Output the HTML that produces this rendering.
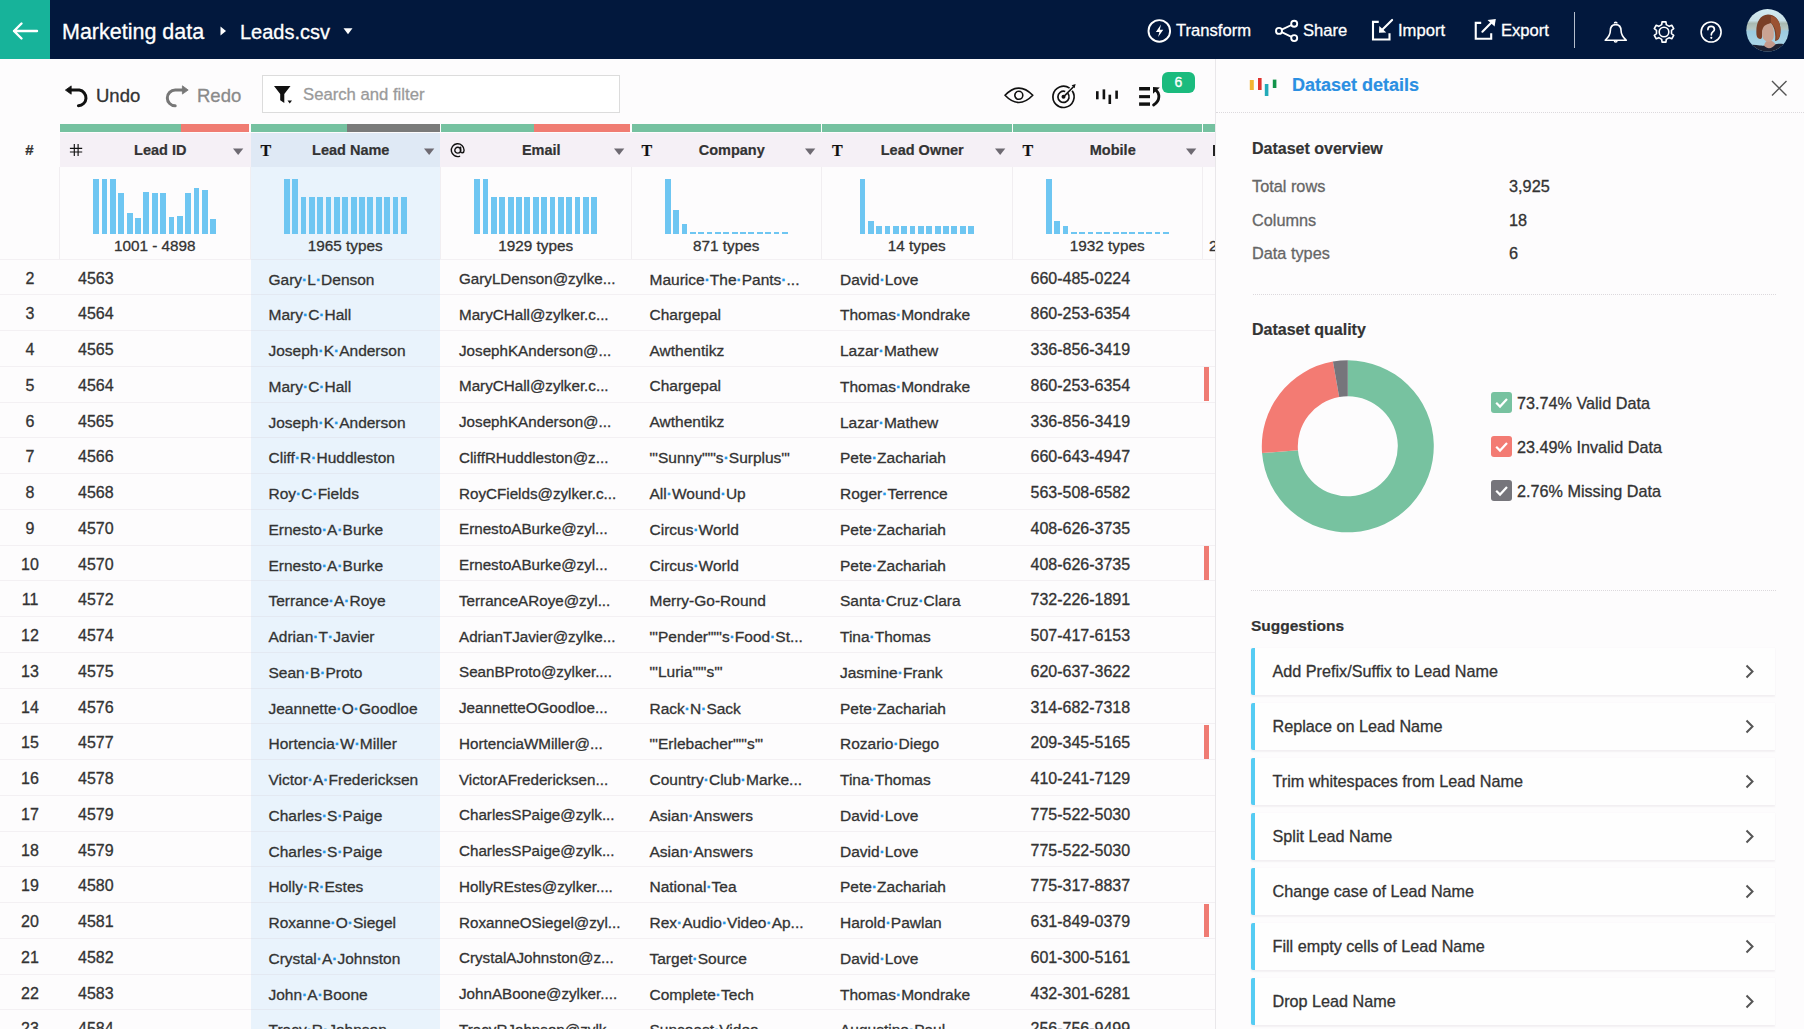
<!DOCTYPE html><html><head><meta charset="utf-8"><style>
*{margin:0;padding:0;box-sizing:border-box}
html,body{width:1804px;height:1029px;overflow:hidden;background:#fdfcfd;font-family:"Liberation Sans", sans-serif;color:#303030}
.a{position:absolute}
.t{position:absolute;white-space:nowrap;line-height:1;-webkit-text-stroke:0.3px currentColor}
.t[style*="bold"]{-webkit-text-stroke:0.2px currentColor}
i.d{font-style:normal;color:#2196e8;font-weight:bold}
</style></head><body>
<div class="a" style="left:0;top:0;width:1804px;height:59px;background:#02183d"></div>
<div class="a" style="left:0;top:0;width:50px;height:59px;background:#17b39a"></div>
<svg class="a" style="left:0;top:0" width="50" height="59"><path d="M37 31 H14 M21.5 23.5 L14 31 L21.5 38.5" stroke="#fff" stroke-width="2.4" fill="none" stroke-linecap="round" stroke-linejoin="round"/></svg>
<div class="t" style="left:62px;top:21.5px;font-size:21.5px;color:#fff">Marketing data</div>
<svg class="a" style="left:218px;top:24px" width="12" height="14"><path d="M2.5 2.6 L8 7.1 L2.5 11.6Z" fill="#fff"/></svg>
<div class="t" style="left:240px;top:21.5px;font-size:20px;color:#fff">Leads.csv</div>
<svg class="a" style="left:341px;top:26px" width="14" height="10"><path d="M2.5 2.3 H11.5 L7 8.3Z" fill="#fff"/></svg>
<svg class="a" style="left:1140px;top:10px" width="40" height="42"><circle cx="19.3" cy="20.9" r="10.8" stroke="#fff" stroke-width="1.9" fill="none"/><path d="M21 14.5 L15.9 22 H19.4 L18.1 27.1 L23.3 19.7 H19.8 Z" fill="#fff"/></svg>
<div class="t" style="left:1176px;top:23.3px;font-size:16.6px;color:#fff">Transform</div>
<svg class="a" style="left:1270px;top:14px" width="32" height="34"><circle cx="24.2" cy="9.7" r="3" stroke="#fff" stroke-width="1.9" fill="none"/><circle cx="9" cy="16.9" r="3" stroke="#fff" stroke-width="1.9" fill="none"/><circle cx="24.2" cy="24.1" r="3" stroke="#fff" stroke-width="1.9" fill="none"/><path d="M11.7 15.6 L21.5 11 M11.7 18.2 L21.5 22.8" stroke="#fff" stroke-width="1.9"/></svg>
<div class="t" style="left:1303px;top:23.3px;font-size:16.6px;color:#fff">Share</div>
<svg class="a" style="left:1366px;top:14px" width="32" height="32"><path d="M12.75 7.9 H7 V25.5 H23.5 V19.3" stroke="#fff" stroke-width="2.1" fill="none"/><path d="M26.1 5.9 L16.5 15.5" stroke="#fff" stroke-width="2.1" stroke-linecap="round"/><path d="M13.3 12 L13 18.7 L20.2 18.4Z" fill="#fff"/></svg>
<div class="t" style="left:1398px;top:23.3px;font-size:16.6px;color:#fff">Import</div>
<svg class="a" style="left:1470px;top:14px" width="32" height="32"><path d="M11.2 8.9 H5.75 V24.7 H21.2 V19.3" stroke="#fff" stroke-width="2.1" fill="none"/><path d="M12.4 17.7 L21.5 8.6" stroke="#fff" stroke-width="2.1" stroke-linecap="round"/><path d="M17.5 6.1 L25.8 5 L24.6 12.5Z" fill="#fff"/></svg>
<div class="t" style="left:1501px;top:23.3px;font-size:16.6px;color:#fff">Export</div>
<div class="a" style="left:1574px;top:12px;width:1.2px;height:36px;background:#b4bdcc"></div>
<svg class="a" style="left:1600px;top:16px" width="32" height="32"><path d="M5.2 24.3 C8 21.5 10.3 19.5 10.3 15 C10.3 11 12.5 8.6 15.7 8.6 C18.9 8.6 21.1 11 21.1 15 C21.1 19.5 23.4 21.5 26.3 24.3 Z" stroke="#fff" stroke-width="1.6" fill="none" stroke-linejoin="round"/><path d="M14.4 7.6 A1.3 1.3 0 0 1 17 7.6" stroke="#fff" stroke-width="1.5" fill="none"/><path d="M14.4 24.8 A1.3 1.3 0 0 0 17 24.8" stroke="#fff" stroke-width="1.5" fill="none"/></svg>
<svg class="a" style="left:1647.6px;top:16px" width="32" height="32"><path d="M13.72 8.64 L14.05 5.89 L17.95 5.89 L18.28 8.64 L21.23 10.35 L23.79 9.26 L25.73 12.63 L23.51 14.29 L23.51 17.71 L25.73 19.37 L23.79 22.74 L21.23 21.65 L18.28 23.36 L17.95 26.11 L14.05 26.11 L13.72 23.36 L10.77 21.65 L8.21 22.74 L6.27 19.37 L8.49 17.71 L8.49 14.29 L6.27 12.63 L8.21 9.26 L10.77 10.35Z" stroke="#fff" stroke-width="1.6" fill="none" stroke-linejoin="round"/><circle cx="16" cy="16" r="4.8" stroke="#fff" stroke-width="1.6" fill="none"/></svg>
<svg class="a" style="left:1695px;top:16px" width="32" height="32"><circle cx="16.1" cy="16" r="10" stroke="#fff" stroke-width="1.6" fill="none"/><path d="M12.9 13.6 C12.9 11.5 14.3 10.4 16.1 10.4 C18 10.4 19.4 11.6 19.4 13.4 C19.4 15.6 16.3 15.9 16.3 18.8" stroke="#fff" stroke-width="1.7" fill="none" stroke-linecap="round"/><circle cx="16.3" cy="21.8" r="1.1" fill="#fff"/></svg>
<svg class="a" style="left:1745px;top:8px" width="45" height="45"><defs><clipPath id="av"><circle cx="22.5" cy="22.3" r="21.2"/></clipPath>
<linearGradient id="avbg" x1="0" y1="0" x2="0" y2="1"><stop offset="0" stop-color="#d4ecf3"/><stop offset="0.28" stop-color="#c8dfe6"/><stop offset="0.34" stop-color="#a9b9b0"/><stop offset="0.46" stop-color="#b4c6c2"/><stop offset="0.52" stop-color="#9ccbe0"/><stop offset="1" stop-color="#b3dcec"/></linearGradient></defs>
<g clip-path="url(#av)"><rect width="45" height="45" fill="url(#avbg)"/>
<path d="M0 46 L0 38 C5 36 10 36.5 15 37.5 C19 38 27 37 32 36 C36 35.5 40 36 45 38 L45 46Z" fill="#1d2133"/>
<path d="M19 37.8 C20 34 21.5 32.5 24 32.5 C27 32.5 29 34 30.5 36.2 C28 40 23 42 19 37.8Z" fill="#c49a8c"/>
<path d="M11.5 27 C10.5 16 14 7 23 6.5 C31 6.5 35.5 13 35.5 22 C35.5 28 35 32 30 33 C31 26 29.5 19 26 15 C22 17 18 19 17 25 C17 28 17.5 30 16 31 C13 31 12 29.5 11.5 27Z" fill="#7a3f27"/>
<path d="M26 15 C30 18 32 24 31.5 32 C34 31 35.5 27 35.5 22 C35.5 15 32 9 26 8Z" fill="#9b5232"/>
<path d="M17 25 C17 18 21 16 25.5 15.5 C28.5 19 29.5 25 28.5 30 C27 33.5 24 34.5 21.5 33.5 C18.5 32 17 29 17 25Z" fill="#caa393"/>
</g></svg>
<svg class="a" style="left:60px;top:80px" width="32" height="32"><path d="M10 10.1 H19.3 A7.9 7.9 0 0 1 18.4 25.8" stroke="#111" stroke-width="3" fill="none" stroke-linecap="round"/><path d="M5.4 10.1 L11.2 5.9 L11.2 14.2Z" fill="#111" stroke="#111" stroke-width="0.8" stroke-linejoin="round"/></svg>
<div class="t" style="left:96px;top:87px;font-size:18.5px;color:#333">Undo</div>
<svg class="a" style="left:160px;top:80px" width="32" height="32"><path d="M23 10 H15.2 A7.9 7.9 0 0 0 15.2 25.8" stroke="#777" stroke-width="3" fill="none" stroke-linecap="round"/><path d="M28.2 10 L22.4 5.8 L22.4 14.1Z" fill="#777" stroke="#777" stroke-width="0.8" stroke-linejoin="round"/></svg>
<div class="t" style="left:197px;top:87px;font-size:18.5px;color:#8a8a8a">Redo</div>
<div class="a" style="left:262px;top:75px;width:357.5px;height:38px;background:#fff;border:1px solid #dcdcdc"></div>
<svg class="a" style="left:270px;top:82px" width="26" height="26"><path d="M4 4 H20.5 L14.3 12 V21 L10.2 18.3 V12 Z" fill="#111"/><path d="M17.5 18.5 H22 L19.75 21.5Z" fill="#111"/></svg>
<div class="t" style="left:303px;top:86.5px;font-size:16.7px;color:#9a9a9a">Search and filter</div>
<svg class="a" style="left:1000px;top:80px" width="38" height="30"><path d="M5 15.3 Q18.9 0.9 32.8 15.3 Q18.9 29.7 5 15.3Z" stroke="#111" stroke-width="1.6" fill="none" stroke-linejoin="round"/><circle cx="18.8" cy="15.3" r="4" stroke="#111" stroke-width="1.6" fill="none"/></svg>
<svg class="a" style="left:1048px;top:80px" width="32" height="32"><path d="M21.58 8.17 A10.6 10.6 0 1 0 24.18 10.77" stroke="#111" stroke-width="1.7" fill="none"/><path d="M17.23 11.52 A5.6 5.6 0 1 0 19.79 13.25" stroke="#111" stroke-width="1.7" fill="none"/><circle cx="15.5" cy="16.85" r="2" fill="#111"/><path d="M15.5 16.85 L25.5 6.8" stroke="#111" stroke-width="1.6"/><path d="M23.6 5.2 L27.6 3.9 L26.6 8.2Z" fill="#111"/></svg>
<svg class="a" style="left:1090px;top:84px" width="34" height="24"><rect x="6" y="7.2" width="2.6" height="8.1" fill="#111"/><rect x="12.6" y="5.4" width="2.6" height="9.9" fill="#111"/><rect x="18.5" y="10.7" width="2.6" height="9.3" fill="#111"/><rect x="25.3" y="6.6" width="2.6" height="8.2" fill="#111"/></svg>
<svg class="a" style="left:1134px;top:82px" width="32" height="30"><rect x="5.1" y="5" width="10.9" height="3.5" fill="#111"/><rect x="5.1" y="13.1" width="10.9" height="3.1" fill="#111"/><rect x="5.1" y="20.4" width="10.9" height="3.4" fill="#111"/><path d="M21.5 7.8 C25.8 11 26.8 18.5 19.6 23" stroke="#111" stroke-width="2.8" fill="none" stroke-linecap="round"/><path d="M19 5 L25.8 5.4 L19 11.8Z" fill="#111"/></svg>
<div class="a" style="left:1162px;top:71.5px;width:33px;height:21.5px;border-radius:6px;background:#1bbb7e"></div>
<div class="t" style="left:1162px;top:75px;width:33px;text-align:center;font-size:14px;color:#fff">6</div>
<div class="a" style="left:60.00px;top:124px;width:121.28px;height:8px;background:#75c1a0"></div>
<div class="a" style="left:181.28px;top:124px;width:68.22px;height:8px;background:#f07c72"></div>
<div class="a" style="left:250.50px;top:124px;width:96.64px;height:8px;background:#75c1a0"></div>
<div class="a" style="left:347.14px;top:124px;width:92.86px;height:8px;background:#7a7a7a"></div>
<div class="a" style="left:441.00px;top:124px;width:92.86px;height:8px;background:#75c1a0"></div>
<div class="a" style="left:533.86px;top:124px;width:96.64px;height:8px;background:#f07c72"></div>
<div class="a" style="left:631.50px;top:124px;width:189.50px;height:8px;background:#75c1a0"></div>
<div class="a" style="left:822.00px;top:124px;width:189.50px;height:8px;background:#75c1a0"></div>
<div class="a" style="left:1012.50px;top:124px;width:189.50px;height:8px;background:#75c1a0"></div>
<div class="a" style="left:1203.00px;top:124px;width:12.00px;height:8px;background:#75c1a0"></div>
<div class="a" style="left:60px;top:133px;width:1155px;height:34px;background:#f5f0f6"></div>
<div class="a" style="left:250.50px;top:133px;width:189.50px;height:34px;background:#dfe9f5"></div>
<div class="a" style="left:250.50px;top:167px;width:189.50px;height:870px;background:#e9f3fc"></div>
<div class="t" style="left:25.3px;top:142px;font-size:15px;font-weight:bold;color:#333">#</div>
<div class="a" style="left:1213.3px;top:145px;width:2px;height:11px;background:#222"></div>
<svg class="a" style="left:60.00px;top:135px" width="30" height="30"><path d="M14.3 9 V21 M18.1 9 V21 M9.9 13.4 H22.2 M9.9 17 H22.2" stroke="#111" stroke-width="1.15"/></svg>
<div class="t" style="left:65.00px;top:143px;width:190.50px;text-align:center;font-size:14.5px;font-weight:bold;color:#333">Lead ID</div>
<svg class="a" style="left:232.00px;top:146px" width="14" height="12"><path d="M1 2.5 H11.3 L6.15 9Z" fill="#6e6a72"/></svg>
<div class="t" style="left:260.50px;top:143px;font-size:16px;font-weight:bold;font-family:'Liberation Serif';color:#111">T</div>
<div class="t" style="left:255.50px;top:143px;width:190.50px;text-align:center;font-size:14.5px;font-weight:bold;color:#333">Lead Name</div>
<svg class="a" style="left:422.50px;top:146px" width="14" height="12"><path d="M1 2.5 H11.3 L6.15 9Z" fill="#6e6a72"/></svg>
<svg class="a" style="left:448.00px;top:140px" width="20" height="20"><circle cx="9.7" cy="10.2" r="2.9" stroke="#111" stroke-width="1.4" fill="none"/><path d="M12.6 7.3 V11.3 C12.6 13.5 16.1 13.5 16.1 10.2 A6.4 6.4 0 1 0 11.6 16.3" stroke="#111" stroke-width="1.4" fill="none" stroke-linecap="round"/></svg>
<div class="t" style="left:446.00px;top:143px;width:190.50px;text-align:center;font-size:14.5px;font-weight:bold;color:#333">Email</div>
<svg class="a" style="left:613.00px;top:146px" width="14" height="12"><path d="M1 2.5 H11.3 L6.15 9Z" fill="#6e6a72"/></svg>
<div class="t" style="left:641.50px;top:143px;font-size:16px;font-weight:bold;font-family:'Liberation Serif';color:#111">T</div>
<div class="t" style="left:636.50px;top:143px;width:190.50px;text-align:center;font-size:14.5px;font-weight:bold;color:#333">Company</div>
<svg class="a" style="left:803.50px;top:146px" width="14" height="12"><path d="M1 2.5 H11.3 L6.15 9Z" fill="#6e6a72"/></svg>
<div class="t" style="left:832.00px;top:143px;font-size:16px;font-weight:bold;font-family:'Liberation Serif';color:#111">T</div>
<div class="t" style="left:827.00px;top:143px;width:190.50px;text-align:center;font-size:14.5px;font-weight:bold;color:#333">Lead Owner</div>
<svg class="a" style="left:994.00px;top:146px" width="14" height="12"><path d="M1 2.5 H11.3 L6.15 9Z" fill="#6e6a72"/></svg>
<div class="t" style="left:1022.50px;top:143px;font-size:16px;font-weight:bold;font-family:'Liberation Serif';color:#111">T</div>
<div class="t" style="left:1017.50px;top:143px;width:190.50px;text-align:center;font-size:14.5px;font-weight:bold;color:#333">Mobile</div>
<svg class="a" style="left:1184.50px;top:146px" width="14" height="12"><path d="M1 2.5 H11.3 L6.15 9Z" fill="#6e6a72"/></svg>
<div class="a" style="left:59.00px;top:167px;width:1px;height:92px;background:#f1eef1"></div>
<div class="a" style="left:249.50px;top:167px;width:1px;height:92px;background:#f1eef1"></div>
<div class="a" style="left:440.00px;top:167px;width:1px;height:92px;background:#f1eef1"></div>
<div class="a" style="left:630.50px;top:167px;width:1px;height:92px;background:#f1eef1"></div>
<div class="a" style="left:821.00px;top:167px;width:1px;height:92px;background:#f1eef1"></div>
<div class="a" style="left:1011.50px;top:167px;width:1px;height:92px;background:#f1eef1"></div>
<div class="a" style="left:1202.00px;top:167px;width:1px;height:92px;background:#f1eef1"></div>
<div class="a" style="left:93.33px;top:178.80px;width:5.8px;height:54.80px;background:#6ec6f2"></div>
<div class="a" style="left:101.69px;top:178.80px;width:5.8px;height:54.80px;background:#6ec6f2"></div>
<div class="a" style="left:110.05px;top:178.80px;width:5.8px;height:54.80px;background:#6ec6f2"></div>
<div class="a" style="left:118.41px;top:193.20px;width:5.8px;height:40.40px;background:#6ec6f2"></div>
<div class="a" style="left:126.77px;top:213.40px;width:5.8px;height:20.20px;background:#6ec6f2"></div>
<div class="a" style="left:135.13px;top:218.20px;width:5.8px;height:15.40px;background:#6ec6f2"></div>
<div class="a" style="left:143.49px;top:191.90px;width:5.8px;height:41.70px;background:#6ec6f2"></div>
<div class="a" style="left:151.85px;top:193.20px;width:5.8px;height:40.40px;background:#6ec6f2"></div>
<div class="a" style="left:160.21px;top:193.20px;width:5.8px;height:40.40px;background:#6ec6f2"></div>
<div class="a" style="left:168.57px;top:217.00px;width:5.8px;height:16.60px;background:#6ec6f2"></div>
<div class="a" style="left:176.93px;top:215.70px;width:5.8px;height:17.90px;background:#6ec6f2"></div>
<div class="a" style="left:185.29px;top:193.20px;width:5.8px;height:40.40px;background:#6ec6f2"></div>
<div class="a" style="left:193.65px;top:188.20px;width:5.8px;height:45.40px;background:#6ec6f2"></div>
<div class="a" style="left:202.01px;top:189.60px;width:5.8px;height:44.00px;background:#6ec6f2"></div>
<div class="a" style="left:210.37px;top:219.20px;width:5.8px;height:14.40px;background:#6ec6f2"></div>
<div class="t" style="left:59.50px;top:238px;width:190.50px;text-align:center;font-size:15.3px;color:#333">1001 - 4898</div>
<div class="a" style="left:283.83px;top:179.20px;width:5.8px;height:54.40px;background:#6ec6f2"></div>
<div class="a" style="left:292.19px;top:179.20px;width:5.8px;height:54.40px;background:#6ec6f2"></div>
<div class="a" style="left:300.55px;top:196.90px;width:5.8px;height:36.70px;background:#6ec6f2"></div>
<div class="a" style="left:308.91px;top:196.90px;width:5.8px;height:36.70px;background:#6ec6f2"></div>
<div class="a" style="left:317.27px;top:196.90px;width:5.8px;height:36.70px;background:#6ec6f2"></div>
<div class="a" style="left:325.63px;top:196.90px;width:5.8px;height:36.70px;background:#6ec6f2"></div>
<div class="a" style="left:333.99px;top:196.90px;width:5.8px;height:36.70px;background:#6ec6f2"></div>
<div class="a" style="left:342.35px;top:196.90px;width:5.8px;height:36.70px;background:#6ec6f2"></div>
<div class="a" style="left:350.71px;top:196.90px;width:5.8px;height:36.70px;background:#6ec6f2"></div>
<div class="a" style="left:359.07px;top:196.90px;width:5.8px;height:36.70px;background:#6ec6f2"></div>
<div class="a" style="left:367.43px;top:196.90px;width:5.8px;height:36.70px;background:#6ec6f2"></div>
<div class="a" style="left:375.79px;top:196.90px;width:5.8px;height:36.70px;background:#6ec6f2"></div>
<div class="a" style="left:384.15px;top:196.90px;width:5.8px;height:36.70px;background:#6ec6f2"></div>
<div class="a" style="left:392.51px;top:196.90px;width:5.8px;height:36.70px;background:#6ec6f2"></div>
<div class="a" style="left:400.87px;top:196.90px;width:5.8px;height:36.70px;background:#6ec6f2"></div>
<div class="t" style="left:250.00px;top:238px;width:190.50px;text-align:center;font-size:15.3px;color:#333">1965 types</div>
<div class="a" style="left:474.33px;top:178.90px;width:5.8px;height:54.70px;background:#6ec6f2"></div>
<div class="a" style="left:482.69px;top:178.90px;width:5.8px;height:54.70px;background:#6ec6f2"></div>
<div class="a" style="left:491.05px;top:197.00px;width:5.8px;height:36.60px;background:#6ec6f2"></div>
<div class="a" style="left:499.41px;top:197.00px;width:5.8px;height:36.60px;background:#6ec6f2"></div>
<div class="a" style="left:507.77px;top:197.00px;width:5.8px;height:36.60px;background:#6ec6f2"></div>
<div class="a" style="left:516.13px;top:197.00px;width:5.8px;height:36.60px;background:#6ec6f2"></div>
<div class="a" style="left:524.49px;top:197.00px;width:5.8px;height:36.60px;background:#6ec6f2"></div>
<div class="a" style="left:532.85px;top:197.00px;width:5.8px;height:36.60px;background:#6ec6f2"></div>
<div class="a" style="left:541.21px;top:197.00px;width:5.8px;height:36.60px;background:#6ec6f2"></div>
<div class="a" style="left:549.57px;top:197.00px;width:5.8px;height:36.60px;background:#6ec6f2"></div>
<div class="a" style="left:557.93px;top:197.00px;width:5.8px;height:36.60px;background:#6ec6f2"></div>
<div class="a" style="left:566.29px;top:197.00px;width:5.8px;height:36.60px;background:#6ec6f2"></div>
<div class="a" style="left:574.65px;top:197.00px;width:5.8px;height:36.60px;background:#6ec6f2"></div>
<div class="a" style="left:583.01px;top:197.00px;width:5.8px;height:36.60px;background:#6ec6f2"></div>
<div class="a" style="left:591.37px;top:197.00px;width:5.8px;height:36.60px;background:#6ec6f2"></div>
<div class="t" style="left:440.50px;top:238px;width:190.50px;text-align:center;font-size:15.3px;color:#333">1929 types</div>
<div class="a" style="left:664.83px;top:178.90px;width:5.8px;height:54.70px;background:#6ec6f2"></div>
<div class="a" style="left:673.19px;top:209.90px;width:5.8px;height:23.70px;background:#6ec6f2"></div>
<div class="a" style="left:681.55px;top:224.10px;width:5.8px;height:9.50px;background:#6ec6f2"></div>
<div class="a" style="left:689.91px;top:232px;width:5.8px;height:1.6px;background:#6ec6f2"></div>
<div class="a" style="left:698.27px;top:232px;width:5.8px;height:1.6px;background:#6ec6f2"></div>
<div class="a" style="left:706.63px;top:232px;width:5.8px;height:1.6px;background:#6ec6f2"></div>
<div class="a" style="left:714.99px;top:232px;width:5.8px;height:1.6px;background:#6ec6f2"></div>
<div class="a" style="left:723.35px;top:232px;width:5.8px;height:1.6px;background:#6ec6f2"></div>
<div class="a" style="left:731.71px;top:232px;width:5.8px;height:1.6px;background:#6ec6f2"></div>
<div class="a" style="left:740.07px;top:232px;width:5.8px;height:1.6px;background:#6ec6f2"></div>
<div class="a" style="left:748.43px;top:232px;width:5.8px;height:1.6px;background:#6ec6f2"></div>
<div class="a" style="left:756.79px;top:232px;width:5.8px;height:1.6px;background:#6ec6f2"></div>
<div class="a" style="left:765.15px;top:232px;width:5.8px;height:1.6px;background:#6ec6f2"></div>
<div class="a" style="left:773.51px;top:232px;width:5.8px;height:1.6px;background:#6ec6f2"></div>
<div class="a" style="left:781.87px;top:232px;width:5.8px;height:1.6px;background:#6ec6f2"></div>
<div class="t" style="left:631.00px;top:238px;width:190.50px;text-align:center;font-size:15.3px;color:#333">871 types</div>
<div class="a" style="left:859.51px;top:178.90px;width:5.8px;height:54.70px;background:#6ec6f2"></div>
<div class="a" style="left:867.87px;top:220.90px;width:5.8px;height:12.70px;background:#6ec6f2"></div>
<div class="a" style="left:876.23px;top:225.50px;width:5.8px;height:8.10px;background:#6ec6f2"></div>
<div class="a" style="left:884.59px;top:225.50px;width:5.8px;height:8.10px;background:#6ec6f2"></div>
<div class="a" style="left:892.95px;top:225.50px;width:5.8px;height:8.10px;background:#6ec6f2"></div>
<div class="a" style="left:901.31px;top:225.50px;width:5.8px;height:8.10px;background:#6ec6f2"></div>
<div class="a" style="left:909.67px;top:225.50px;width:5.8px;height:8.10px;background:#6ec6f2"></div>
<div class="a" style="left:918.03px;top:225.50px;width:5.8px;height:8.10px;background:#6ec6f2"></div>
<div class="a" style="left:926.39px;top:225.50px;width:5.8px;height:8.10px;background:#6ec6f2"></div>
<div class="a" style="left:934.75px;top:225.50px;width:5.8px;height:8.10px;background:#6ec6f2"></div>
<div class="a" style="left:943.11px;top:225.50px;width:5.8px;height:8.10px;background:#6ec6f2"></div>
<div class="a" style="left:951.47px;top:225.50px;width:5.8px;height:8.10px;background:#6ec6f2"></div>
<div class="a" style="left:959.83px;top:225.50px;width:5.8px;height:8.10px;background:#6ec6f2"></div>
<div class="a" style="left:968.19px;top:225.50px;width:5.8px;height:8.10px;background:#6ec6f2"></div>
<div class="t" style="left:821.50px;top:238px;width:190.50px;text-align:center;font-size:15.3px;color:#333">14 types</div>
<div class="a" style="left:1045.83px;top:178.90px;width:5.8px;height:54.70px;background:#6ec6f2"></div>
<div class="a" style="left:1054.19px;top:220.90px;width:5.8px;height:12.70px;background:#6ec6f2"></div>
<div class="a" style="left:1062.55px;top:225.50px;width:5.8px;height:8.10px;background:#6ec6f2"></div>
<div class="a" style="left:1070.91px;top:232px;width:5.8px;height:1.6px;background:#6ec6f2"></div>
<div class="a" style="left:1079.27px;top:232px;width:5.8px;height:1.6px;background:#6ec6f2"></div>
<div class="a" style="left:1087.63px;top:232px;width:5.8px;height:1.6px;background:#6ec6f2"></div>
<div class="a" style="left:1095.99px;top:232px;width:5.8px;height:1.6px;background:#6ec6f2"></div>
<div class="a" style="left:1104.35px;top:232px;width:5.8px;height:1.6px;background:#6ec6f2"></div>
<div class="a" style="left:1112.71px;top:232px;width:5.8px;height:1.6px;background:#6ec6f2"></div>
<div class="a" style="left:1121.07px;top:232px;width:5.8px;height:1.6px;background:#6ec6f2"></div>
<div class="a" style="left:1129.43px;top:232px;width:5.8px;height:1.6px;background:#6ec6f2"></div>
<div class="a" style="left:1137.79px;top:232px;width:5.8px;height:1.6px;background:#6ec6f2"></div>
<div class="a" style="left:1146.15px;top:232px;width:5.8px;height:1.6px;background:#6ec6f2"></div>
<div class="a" style="left:1154.51px;top:232px;width:5.8px;height:1.6px;background:#6ec6f2"></div>
<div class="a" style="left:1162.87px;top:232px;width:5.8px;height:1.6px;background:#6ec6f2"></div>
<div class="t" style="left:1012.00px;top:238px;width:190.50px;text-align:center;font-size:15.3px;color:#333">1932 types</div>
<div class="t" style="left:1209.00px;top:238px;font-size:15.3px;color:#333">2</div>
<div class="a" style="left:0;top:258.70px;width:1215px;height:1px;background:rgba(200,190,200,0.18)"></div>
<div class="t" style="left:0;top:270.70px;width:60px;text-align:center;font-size:16px;color:#333">2</div>
<div class="t" style="left:78.00px;top:270.70px;font-size:16px;color:#333">4563</div>
<div class="t" style="left:268.50px;top:271.70px;font-size:15.5px;color:#333">Gary<i class="d">&middot;</i>L<i class="d">&middot;</i>Denson</div>
<div class="t" style="left:459.00px;top:271.20px;font-size:15.2px;color:#333">GaryLDenson@zylke...</div>
<div class="t" style="left:649.50px;top:271.70px;font-size:15.5px;color:#333">Maurice<i class="d">&middot;</i>The<i class="d">&middot;</i>Pants<i class="d">&middot;</i>...</div>
<div class="t" style="left:840.00px;top:271.70px;font-size:15.5px;color:#333">David<i class="d">&middot;</i>Love</div>
<div class="t" style="left:1030.50px;top:270.70px;font-size:16px;color:#333">660-485-0224</div>
<div class="a" style="left:0;top:294.45px;width:1215px;height:1px;background:rgba(200,190,200,0.18)"></div>
<div class="t" style="left:0;top:306.45px;width:60px;text-align:center;font-size:16px;color:#333">3</div>
<div class="t" style="left:78.00px;top:306.45px;font-size:16px;color:#333">4564</div>
<div class="t" style="left:268.50px;top:307.45px;font-size:15.5px;color:#333">Mary<i class="d">&middot;</i>C<i class="d">&middot;</i>Hall</div>
<div class="t" style="left:459.00px;top:306.95px;font-size:15.2px;color:#333">MaryCHall@zylker.c...</div>
<div class="t" style="left:649.50px;top:306.95px;font-size:15.5px;color:#333">Chargepal</div>
<div class="t" style="left:840.00px;top:307.45px;font-size:15.5px;color:#333">Thomas<i class="d">&middot;</i>Mondrake</div>
<div class="t" style="left:1030.50px;top:306.45px;font-size:16px;color:#333">860-253-6354</div>
<div class="a" style="left:0;top:330.20px;width:1215px;height:1px;background:rgba(200,190,200,0.18)"></div>
<div class="t" style="left:0;top:342.20px;width:60px;text-align:center;font-size:16px;color:#333">4</div>
<div class="t" style="left:78.00px;top:342.20px;font-size:16px;color:#333">4565</div>
<div class="t" style="left:268.50px;top:343.20px;font-size:15.5px;color:#333">Joseph<i class="d">&middot;</i>K<i class="d">&middot;</i>Anderson</div>
<div class="t" style="left:459.00px;top:342.70px;font-size:15.2px;color:#333">JosephKAnderson@...</div>
<div class="t" style="left:649.50px;top:342.70px;font-size:15.5px;color:#333">Awthentikz</div>
<div class="t" style="left:840.00px;top:343.20px;font-size:15.5px;color:#333">Lazar<i class="d">&middot;</i>Mathew</div>
<div class="t" style="left:1030.50px;top:342.20px;font-size:16px;color:#333">336-856-3419</div>
<div class="a" style="left:0;top:365.95px;width:1215px;height:1px;background:rgba(200,190,200,0.18)"></div>
<div class="t" style="left:0;top:377.95px;width:60px;text-align:center;font-size:16px;color:#333">5</div>
<div class="t" style="left:78.00px;top:377.95px;font-size:16px;color:#333">4564</div>
<div class="t" style="left:268.50px;top:378.95px;font-size:15.5px;color:#333">Mary<i class="d">&middot;</i>C<i class="d">&middot;</i>Hall</div>
<div class="t" style="left:459.00px;top:378.45px;font-size:15.2px;color:#333">MaryCHall@zylker.c...</div>
<div class="t" style="left:649.50px;top:378.45px;font-size:15.5px;color:#333">Chargepal</div>
<div class="t" style="left:840.00px;top:378.95px;font-size:15.5px;color:#333">Thomas<i class="d">&middot;</i>Mondrake</div>
<div class="t" style="left:1030.50px;top:377.95px;font-size:16px;color:#333">860-253-6354</div>
<div class="a" style="left:1203.5px;top:367.45px;width:5px;height:33.75px;background:#ef7b73"></div>
<div class="a" style="left:0;top:401.70px;width:1215px;height:1px;background:rgba(200,190,200,0.18)"></div>
<div class="t" style="left:0;top:413.70px;width:60px;text-align:center;font-size:16px;color:#333">6</div>
<div class="t" style="left:78.00px;top:413.70px;font-size:16px;color:#333">4565</div>
<div class="t" style="left:268.50px;top:414.70px;font-size:15.5px;color:#333">Joseph<i class="d">&middot;</i>K<i class="d">&middot;</i>Anderson</div>
<div class="t" style="left:459.00px;top:414.20px;font-size:15.2px;color:#333">JosephKAnderson@...</div>
<div class="t" style="left:649.50px;top:414.20px;font-size:15.5px;color:#333">Awthentikz</div>
<div class="t" style="left:840.00px;top:414.70px;font-size:15.5px;color:#333">Lazar<i class="d">&middot;</i>Mathew</div>
<div class="t" style="left:1030.50px;top:413.70px;font-size:16px;color:#333">336-856-3419</div>
<div class="a" style="left:0;top:437.45px;width:1215px;height:1px;background:rgba(200,190,200,0.18)"></div>
<div class="t" style="left:0;top:449.45px;width:60px;text-align:center;font-size:16px;color:#333">7</div>
<div class="t" style="left:78.00px;top:449.45px;font-size:16px;color:#333">4566</div>
<div class="t" style="left:268.50px;top:450.45px;font-size:15.5px;color:#333">Cliff<i class="d">&middot;</i>R<i class="d">&middot;</i>Huddleston</div>
<div class="t" style="left:459.00px;top:449.95px;font-size:15.2px;color:#333">CliffRHuddleston@z...</div>
<div class="t" style="left:649.50px;top:450.45px;font-size:15.5px;color:#333">"'Sunny""'s<i class="d">&middot;</i>Surplus'"</div>
<div class="t" style="left:840.00px;top:450.45px;font-size:15.5px;color:#333">Pete<i class="d">&middot;</i>Zachariah</div>
<div class="t" style="left:1030.50px;top:449.45px;font-size:16px;color:#333">660-643-4947</div>
<div class="a" style="left:0;top:473.20px;width:1215px;height:1px;background:rgba(200,190,200,0.18)"></div>
<div class="t" style="left:0;top:485.20px;width:60px;text-align:center;font-size:16px;color:#333">8</div>
<div class="t" style="left:78.00px;top:485.20px;font-size:16px;color:#333">4568</div>
<div class="t" style="left:268.50px;top:486.20px;font-size:15.5px;color:#333">Roy<i class="d">&middot;</i>C<i class="d">&middot;</i>Fields</div>
<div class="t" style="left:459.00px;top:485.70px;font-size:15.2px;color:#333">RoyCFields@zylker.c...</div>
<div class="t" style="left:649.50px;top:486.20px;font-size:15.5px;color:#333">All<i class="d">&middot;</i>Wound<i class="d">&middot;</i>Up</div>
<div class="t" style="left:840.00px;top:486.20px;font-size:15.5px;color:#333">Roger<i class="d">&middot;</i>Terrence</div>
<div class="t" style="left:1030.50px;top:485.20px;font-size:16px;color:#333">563-508-6582</div>
<div class="a" style="left:0;top:508.95px;width:1215px;height:1px;background:rgba(200,190,200,0.18)"></div>
<div class="t" style="left:0;top:520.95px;width:60px;text-align:center;font-size:16px;color:#333">9</div>
<div class="t" style="left:78.00px;top:520.95px;font-size:16px;color:#333">4570</div>
<div class="t" style="left:268.50px;top:521.95px;font-size:15.5px;color:#333">Ernesto<i class="d">&middot;</i>A<i class="d">&middot;</i>Burke</div>
<div class="t" style="left:459.00px;top:521.45px;font-size:15.2px;color:#333">ErnestoABurke@zyl...</div>
<div class="t" style="left:649.50px;top:521.95px;font-size:15.5px;color:#333">Circus<i class="d">&middot;</i>World</div>
<div class="t" style="left:840.00px;top:521.95px;font-size:15.5px;color:#333">Pete<i class="d">&middot;</i>Zachariah</div>
<div class="t" style="left:1030.50px;top:520.95px;font-size:16px;color:#333">408-626-3735</div>
<div class="a" style="left:0;top:544.70px;width:1215px;height:1px;background:rgba(200,190,200,0.18)"></div>
<div class="t" style="left:0;top:556.70px;width:60px;text-align:center;font-size:16px;color:#333">10</div>
<div class="t" style="left:78.00px;top:556.70px;font-size:16px;color:#333">4570</div>
<div class="t" style="left:268.50px;top:557.70px;font-size:15.5px;color:#333">Ernesto<i class="d">&middot;</i>A<i class="d">&middot;</i>Burke</div>
<div class="t" style="left:459.00px;top:557.20px;font-size:15.2px;color:#333">ErnestoABurke@zyl...</div>
<div class="t" style="left:649.50px;top:557.70px;font-size:15.5px;color:#333">Circus<i class="d">&middot;</i>World</div>
<div class="t" style="left:840.00px;top:557.70px;font-size:15.5px;color:#333">Pete<i class="d">&middot;</i>Zachariah</div>
<div class="t" style="left:1030.50px;top:556.70px;font-size:16px;color:#333">408-626-3735</div>
<div class="a" style="left:1203.5px;top:546.20px;width:5px;height:33.75px;background:#ef7b73"></div>
<div class="a" style="left:0;top:580.45px;width:1215px;height:1px;background:rgba(200,190,200,0.18)"></div>
<div class="t" style="left:0;top:592.45px;width:60px;text-align:center;font-size:16px;color:#333">11</div>
<div class="t" style="left:78.00px;top:592.45px;font-size:16px;color:#333">4572</div>
<div class="t" style="left:268.50px;top:593.45px;font-size:15.5px;color:#333">Terrance<i class="d">&middot;</i>A<i class="d">&middot;</i>Roye</div>
<div class="t" style="left:459.00px;top:592.95px;font-size:15.2px;color:#333">TerranceARoye@zyl...</div>
<div class="t" style="left:649.50px;top:592.95px;font-size:15.5px;color:#333">Merry-Go-Round</div>
<div class="t" style="left:840.00px;top:593.45px;font-size:15.5px;color:#333">Santa<i class="d">&middot;</i>Cruz<i class="d">&middot;</i>Clara</div>
<div class="t" style="left:1030.50px;top:592.45px;font-size:16px;color:#333">732-226-1891</div>
<div class="a" style="left:0;top:616.20px;width:1215px;height:1px;background:rgba(200,190,200,0.18)"></div>
<div class="t" style="left:0;top:628.20px;width:60px;text-align:center;font-size:16px;color:#333">12</div>
<div class="t" style="left:78.00px;top:628.20px;font-size:16px;color:#333">4574</div>
<div class="t" style="left:268.50px;top:629.20px;font-size:15.5px;color:#333">Adrian<i class="d">&middot;</i>T<i class="d">&middot;</i>Javier</div>
<div class="t" style="left:459.00px;top:628.70px;font-size:15.2px;color:#333">AdrianTJavier@zylke...</div>
<div class="t" style="left:649.50px;top:629.20px;font-size:15.5px;color:#333">"'Pender""'s<i class="d">&middot;</i>Food<i class="d">&middot;</i>St...</div>
<div class="t" style="left:840.00px;top:629.20px;font-size:15.5px;color:#333">Tina<i class="d">&middot;</i>Thomas</div>
<div class="t" style="left:1030.50px;top:628.20px;font-size:16px;color:#333">507-417-6153</div>
<div class="a" style="left:0;top:651.95px;width:1215px;height:1px;background:rgba(200,190,200,0.18)"></div>
<div class="t" style="left:0;top:663.95px;width:60px;text-align:center;font-size:16px;color:#333">13</div>
<div class="t" style="left:78.00px;top:663.95px;font-size:16px;color:#333">4575</div>
<div class="t" style="left:268.50px;top:664.95px;font-size:15.5px;color:#333">Sean<i class="d">&middot;</i>B<i class="d">&middot;</i>Proto</div>
<div class="t" style="left:459.00px;top:664.45px;font-size:15.2px;color:#333">SeanBProto@zylker....</div>
<div class="t" style="left:649.50px;top:664.45px;font-size:15.5px;color:#333">"'Luria""'s'"</div>
<div class="t" style="left:840.00px;top:664.95px;font-size:15.5px;color:#333">Jasmine<i class="d">&middot;</i>Frank</div>
<div class="t" style="left:1030.50px;top:663.95px;font-size:16px;color:#333">620-637-3622</div>
<div class="a" style="left:0;top:687.70px;width:1215px;height:1px;background:rgba(200,190,200,0.18)"></div>
<div class="t" style="left:0;top:699.70px;width:60px;text-align:center;font-size:16px;color:#333">14</div>
<div class="t" style="left:78.00px;top:699.70px;font-size:16px;color:#333">4576</div>
<div class="t" style="left:268.50px;top:700.70px;font-size:15.5px;color:#333">Jeannette<i class="d">&middot;</i>O<i class="d">&middot;</i>Goodloe</div>
<div class="t" style="left:459.00px;top:700.20px;font-size:15.2px;color:#333">JeannetteOGoodloe...</div>
<div class="t" style="left:649.50px;top:700.70px;font-size:15.5px;color:#333">Rack<i class="d">&middot;</i>N<i class="d">&middot;</i>Sack</div>
<div class="t" style="left:840.00px;top:700.70px;font-size:15.5px;color:#333">Pete<i class="d">&middot;</i>Zachariah</div>
<div class="t" style="left:1030.50px;top:699.70px;font-size:16px;color:#333">314-682-7318</div>
<div class="a" style="left:0;top:723.45px;width:1215px;height:1px;background:rgba(200,190,200,0.18)"></div>
<div class="t" style="left:0;top:735.45px;width:60px;text-align:center;font-size:16px;color:#333">15</div>
<div class="t" style="left:78.00px;top:735.45px;font-size:16px;color:#333">4577</div>
<div class="t" style="left:268.50px;top:736.45px;font-size:15.5px;color:#333">Hortencia<i class="d">&middot;</i>W<i class="d">&middot;</i>Miller</div>
<div class="t" style="left:459.00px;top:735.95px;font-size:15.2px;color:#333">HortenciaWMiller@...</div>
<div class="t" style="left:649.50px;top:735.95px;font-size:15.5px;color:#333">"'Erlebacher""'s'"</div>
<div class="t" style="left:840.00px;top:736.45px;font-size:15.5px;color:#333">Rozario<i class="d">&middot;</i>Diego</div>
<div class="t" style="left:1030.50px;top:735.45px;font-size:16px;color:#333">209-345-5165</div>
<div class="a" style="left:1203.5px;top:724.95px;width:5px;height:33.75px;background:#ef7b73"></div>
<div class="a" style="left:0;top:759.20px;width:1215px;height:1px;background:rgba(200,190,200,0.18)"></div>
<div class="t" style="left:0;top:771.20px;width:60px;text-align:center;font-size:16px;color:#333">16</div>
<div class="t" style="left:78.00px;top:771.20px;font-size:16px;color:#333">4578</div>
<div class="t" style="left:268.50px;top:772.20px;font-size:15.5px;color:#333">Victor<i class="d">&middot;</i>A<i class="d">&middot;</i>Fredericksen</div>
<div class="t" style="left:459.00px;top:771.70px;font-size:15.2px;color:#333">VictorAFredericksen...</div>
<div class="t" style="left:649.50px;top:772.20px;font-size:15.5px;color:#333">Country<i class="d">&middot;</i>Club<i class="d">&middot;</i>Marke...</div>
<div class="t" style="left:840.00px;top:772.20px;font-size:15.5px;color:#333">Tina<i class="d">&middot;</i>Thomas</div>
<div class="t" style="left:1030.50px;top:771.20px;font-size:16px;color:#333">410-241-7129</div>
<div class="a" style="left:0;top:794.95px;width:1215px;height:1px;background:rgba(200,190,200,0.18)"></div>
<div class="t" style="left:0;top:806.95px;width:60px;text-align:center;font-size:16px;color:#333">17</div>
<div class="t" style="left:78.00px;top:806.95px;font-size:16px;color:#333">4579</div>
<div class="t" style="left:268.50px;top:807.95px;font-size:15.5px;color:#333">Charles<i class="d">&middot;</i>S<i class="d">&middot;</i>Paige</div>
<div class="t" style="left:459.00px;top:807.45px;font-size:15.2px;color:#333">CharlesSPaige@zylk...</div>
<div class="t" style="left:649.50px;top:807.95px;font-size:15.5px;color:#333">Asian<i class="d">&middot;</i>Answers</div>
<div class="t" style="left:840.00px;top:807.95px;font-size:15.5px;color:#333">David<i class="d">&middot;</i>Love</div>
<div class="t" style="left:1030.50px;top:806.95px;font-size:16px;color:#333">775-522-5030</div>
<div class="a" style="left:0;top:830.70px;width:1215px;height:1px;background:rgba(200,190,200,0.18)"></div>
<div class="t" style="left:0;top:842.70px;width:60px;text-align:center;font-size:16px;color:#333">18</div>
<div class="t" style="left:78.00px;top:842.70px;font-size:16px;color:#333">4579</div>
<div class="t" style="left:268.50px;top:843.70px;font-size:15.5px;color:#333">Charles<i class="d">&middot;</i>S<i class="d">&middot;</i>Paige</div>
<div class="t" style="left:459.00px;top:843.20px;font-size:15.2px;color:#333">CharlesSPaige@zylk...</div>
<div class="t" style="left:649.50px;top:843.70px;font-size:15.5px;color:#333">Asian<i class="d">&middot;</i>Answers</div>
<div class="t" style="left:840.00px;top:843.70px;font-size:15.5px;color:#333">David<i class="d">&middot;</i>Love</div>
<div class="t" style="left:1030.50px;top:842.70px;font-size:16px;color:#333">775-522-5030</div>
<div class="a" style="left:0;top:866.45px;width:1215px;height:1px;background:rgba(200,190,200,0.18)"></div>
<div class="t" style="left:0;top:878.45px;width:60px;text-align:center;font-size:16px;color:#333">19</div>
<div class="t" style="left:78.00px;top:878.45px;font-size:16px;color:#333">4580</div>
<div class="t" style="left:268.50px;top:879.45px;font-size:15.5px;color:#333">Holly<i class="d">&middot;</i>R<i class="d">&middot;</i>Estes</div>
<div class="t" style="left:459.00px;top:878.95px;font-size:15.2px;color:#333">HollyREstes@zylker....</div>
<div class="t" style="left:649.50px;top:879.45px;font-size:15.5px;color:#333">National<i class="d">&middot;</i>Tea</div>
<div class="t" style="left:840.00px;top:879.45px;font-size:15.5px;color:#333">Pete<i class="d">&middot;</i>Zachariah</div>
<div class="t" style="left:1030.50px;top:878.45px;font-size:16px;color:#333">775-317-8837</div>
<div class="a" style="left:0;top:902.20px;width:1215px;height:1px;background:rgba(200,190,200,0.18)"></div>
<div class="t" style="left:0;top:914.20px;width:60px;text-align:center;font-size:16px;color:#333">20</div>
<div class="t" style="left:78.00px;top:914.20px;font-size:16px;color:#333">4581</div>
<div class="t" style="left:268.50px;top:915.20px;font-size:15.5px;color:#333">Roxanne<i class="d">&middot;</i>O<i class="d">&middot;</i>Siegel</div>
<div class="t" style="left:459.00px;top:914.70px;font-size:15.2px;color:#333">RoxanneOSiegel@zyl...</div>
<div class="t" style="left:649.50px;top:915.20px;font-size:15.5px;color:#333">Rex<i class="d">&middot;</i>Audio<i class="d">&middot;</i>Video<i class="d">&middot;</i>Ap...</div>
<div class="t" style="left:840.00px;top:915.20px;font-size:15.5px;color:#333">Harold<i class="d">&middot;</i>Pawlan</div>
<div class="t" style="left:1030.50px;top:914.20px;font-size:16px;color:#333">631-849-0379</div>
<div class="a" style="left:1203.5px;top:903.70px;width:5px;height:33.75px;background:#ef7b73"></div>
<div class="a" style="left:0;top:937.95px;width:1215px;height:1px;background:rgba(200,190,200,0.18)"></div>
<div class="t" style="left:0;top:949.95px;width:60px;text-align:center;font-size:16px;color:#333">21</div>
<div class="t" style="left:78.00px;top:949.95px;font-size:16px;color:#333">4582</div>
<div class="t" style="left:268.50px;top:950.95px;font-size:15.5px;color:#333">Crystal<i class="d">&middot;</i>A<i class="d">&middot;</i>Johnston</div>
<div class="t" style="left:459.00px;top:950.45px;font-size:15.2px;color:#333">CrystalAJohnston@z...</div>
<div class="t" style="left:649.50px;top:950.95px;font-size:15.5px;color:#333">Target<i class="d">&middot;</i>Source</div>
<div class="t" style="left:840.00px;top:950.95px;font-size:15.5px;color:#333">David<i class="d">&middot;</i>Love</div>
<div class="t" style="left:1030.50px;top:949.95px;font-size:16px;color:#333">601-300-5161</div>
<div class="a" style="left:0;top:973.70px;width:1215px;height:1px;background:rgba(200,190,200,0.18)"></div>
<div class="t" style="left:0;top:985.70px;width:60px;text-align:center;font-size:16px;color:#333">22</div>
<div class="t" style="left:78.00px;top:985.70px;font-size:16px;color:#333">4583</div>
<div class="t" style="left:268.50px;top:986.70px;font-size:15.5px;color:#333">John<i class="d">&middot;</i>A<i class="d">&middot;</i>Boone</div>
<div class="t" style="left:459.00px;top:986.20px;font-size:15.2px;color:#333">JohnABoone@zylker....</div>
<div class="t" style="left:649.50px;top:986.70px;font-size:15.5px;color:#333">Complete<i class="d">&middot;</i>Tech</div>
<div class="t" style="left:840.00px;top:986.70px;font-size:15.5px;color:#333">Thomas<i class="d">&middot;</i>Mondrake</div>
<div class="t" style="left:1030.50px;top:985.70px;font-size:16px;color:#333">432-301-6281</div>
<div class="a" style="left:0;top:1009.45px;width:1215px;height:1px;background:rgba(200,190,200,0.18)"></div>
<div class="t" style="left:0;top:1021.45px;width:60px;text-align:center;font-size:16px;color:#333">23</div>
<div class="t" style="left:78.00px;top:1021.45px;font-size:16px;color:#333">4584</div>
<div class="t" style="left:268.50px;top:1022.45px;font-size:15.5px;color:#333">Tracy<i class="d">&middot;</i>R<i class="d">&middot;</i>Johnson</div>
<div class="t" style="left:459.00px;top:1021.95px;font-size:15.2px;color:#333">TracyRJohnson@zylk...</div>
<div class="t" style="left:649.50px;top:1022.45px;font-size:15.5px;color:#333">Suncoast<i class="d">&middot;</i>Video</div>
<div class="t" style="left:840.00px;top:1022.45px;font-size:15.5px;color:#333">Augustine<i class="d">&middot;</i>Paul</div>
<div class="t" style="left:1030.50px;top:1021.45px;font-size:16px;color:#333">256-756-9499</div>
<div class="a" style="left:1215px;top:59px;width:589px;height:970px;background:#fdfcfd;border-left:1px solid #e9e7ea"></div>
<svg class="a" style="left:1246px;top:74px" width="34" height="26"><rect x="3.8" y="6" width="4" height="10" fill="#f2b533"/><rect x="12" y="4" width="3.6" height="12" fill="#e0332f"/><rect x="18.8" y="10" width="3.6" height="12" fill="#23aab8"/><rect x="26.8" y="5.6" width="3.6" height="8.4" fill="#12934a"/></svg>
<div class="t" style="left:1292px;top:76px;font-size:18px;font-weight:bold;color:#2b8fe2">Dataset details</div>
<svg class="a" style="left:1764px;top:73px" width="30" height="30"><path d="M8 8 L22.5 22.5 M22.5 8 L8 22.5" stroke="#555" stroke-width="1.4"/></svg>
<div class="a" style="left:1216px;top:112px;width:588px;height:0;border-top:1px dotted #dcd9dd"></div>
<div class="t" style="left:1252px;top:141px;font-size:16px;font-weight:bold;color:#333">Dataset overview</div>
<div class="t" style="left:1252px;top:178.00px;font-size:16.3px;color:#666">Total rows</div>
<div class="t" style="left:1509px;top:178.00px;font-size:16.3px;color:#333">3,925</div>
<div class="t" style="left:1252px;top:211.60px;font-size:16.3px;color:#666">Columns</div>
<div class="t" style="left:1509px;top:211.60px;font-size:16.3px;color:#333">18</div>
<div class="t" style="left:1252px;top:245.20px;font-size:16.3px;color:#666">Data types</div>
<div class="t" style="left:1509px;top:245.20px;font-size:16.3px;color:#333">6</div>
<div class="a" style="left:1253px;top:294px;width:523px;height:0;border-top:1px dotted #dcd9dd"></div>
<div class="t" style="left:1252px;top:322px;font-size:16px;font-weight:bold;color:#333">Dataset quality</div>
<svg class="a" style="left:1240px;top:350px" width="200" height="200"><path d="M107.80 10.30 A86 86 0 1 1 22.07 103.11 L57.96 100.26 A50 50 0 1 0 107.80 46.30Z" fill="#77c2a0"/><path d="M22.07 103.11 A86 86 0 0 1 92.95 11.59 L99.17 47.05 A50 50 0 0 0 57.96 100.26Z" fill="#f37b73"/><path d="M92.95 11.59 A86 86 0 0 1 107.80 10.30 L107.80 46.30 A50 50 0 0 0 99.17 47.05Z" fill="#76757b"/></svg>
<div class="a" style="left:1491px;top:392.00px;width:21px;height:21px;border-radius:3px;background:#77c2a0"></div>
<svg class="a" style="left:1491px;top:392.00px" width="21" height="21"><path d="M5.2 10.8 L9 14.6 L16 7" stroke="#fff" stroke-width="2.2" fill="none"/></svg>
<div class="t" style="left:1517px;top:394.50px;font-size:16.2px;color:#333">73.74% Valid Data</div>
<div class="a" style="left:1491px;top:436.20px;width:21px;height:21px;border-radius:3px;background:#f37b73"></div>
<svg class="a" style="left:1491px;top:436.20px" width="21" height="21"><path d="M5.2 10.8 L9 14.6 L16 7" stroke="#fff" stroke-width="2.2" fill="none"/></svg>
<div class="t" style="left:1517px;top:438.70px;font-size:16.2px;color:#333">23.49% Invalid Data</div>
<div class="a" style="left:1491px;top:480.40px;width:21px;height:21px;border-radius:3px;background:#76757b"></div>
<svg class="a" style="left:1491px;top:480.40px" width="21" height="21"><path d="M5.2 10.8 L9 14.6 L16 7" stroke="#fff" stroke-width="2.2" fill="none"/></svg>
<div class="t" style="left:1517px;top:482.90px;font-size:16.2px;color:#333">2.76% Missing Data</div>
<div class="a" style="left:1251px;top:590px;width:525px;height:0;border-top:1px dotted #dcd9dd"></div>
<div class="t" style="left:1251px;top:618px;font-size:15.5px;font-weight:bold;color:#333">Suggestions</div>
<div class="a" style="left:1251px;top:648px;width:524px;height:47px;background:#fefefe;box-shadow:0 2px 2px rgba(80,60,80,0.06), 0 0 1px rgba(200,170,200,0.25);border-left:4px solid #55ccf3;border-radius:2px 0 0 2px"></div>
<div class="t" style="left:1272.5px;top:662.50px;font-size:16.2px;color:#333">Add Prefix/Suffix to Lead Name</div>
<svg class="a" style="left:1740px;top:662px" width="20" height="20"><path d="M6.5 3.5 L12.5 9.5 L6.5 15.5" stroke="#555" stroke-width="2" fill="none"/></svg>
<div class="a" style="left:1251px;top:703px;width:524px;height:47px;background:#fefefe;box-shadow:0 2px 2px rgba(80,60,80,0.06), 0 0 1px rgba(200,170,200,0.25);border-left:4px solid #55ccf3;border-radius:2px 0 0 2px"></div>
<div class="t" style="left:1272.5px;top:717.50px;font-size:16.2px;color:#333">Replace on Lead Name</div>
<svg class="a" style="left:1740px;top:717px" width="20" height="20"><path d="M6.5 3.5 L12.5 9.5 L6.5 15.5" stroke="#555" stroke-width="2" fill="none"/></svg>
<div class="a" style="left:1251px;top:758px;width:524px;height:47px;background:#fefefe;box-shadow:0 2px 2px rgba(80,60,80,0.06), 0 0 1px rgba(200,170,200,0.25);border-left:4px solid #55ccf3;border-radius:2px 0 0 2px"></div>
<div class="t" style="left:1272.5px;top:772.50px;font-size:16.2px;color:#333">Trim whitespaces from Lead Name</div>
<svg class="a" style="left:1740px;top:772px" width="20" height="20"><path d="M6.5 3.5 L12.5 9.5 L6.5 15.5" stroke="#555" stroke-width="2" fill="none"/></svg>
<div class="a" style="left:1251px;top:813px;width:524px;height:47px;background:#fefefe;box-shadow:0 2px 2px rgba(80,60,80,0.06), 0 0 1px rgba(200,170,200,0.25);border-left:4px solid #55ccf3;border-radius:2px 0 0 2px"></div>
<div class="t" style="left:1272.5px;top:827.50px;font-size:16.2px;color:#333">Split Lead Name</div>
<svg class="a" style="left:1740px;top:827px" width="20" height="20"><path d="M6.5 3.5 L12.5 9.5 L6.5 15.5" stroke="#555" stroke-width="2" fill="none"/></svg>
<div class="a" style="left:1251px;top:868px;width:524px;height:47px;background:#fefefe;box-shadow:0 2px 2px rgba(80,60,80,0.06), 0 0 1px rgba(200,170,200,0.25);border-left:4px solid #55ccf3;border-radius:2px 0 0 2px"></div>
<div class="t" style="left:1272.5px;top:882.50px;font-size:16.2px;color:#333">Change case of Lead Name</div>
<svg class="a" style="left:1740px;top:882px" width="20" height="20"><path d="M6.5 3.5 L12.5 9.5 L6.5 15.5" stroke="#555" stroke-width="2" fill="none"/></svg>
<div class="a" style="left:1251px;top:923px;width:524px;height:47px;background:#fefefe;box-shadow:0 2px 2px rgba(80,60,80,0.06), 0 0 1px rgba(200,170,200,0.25);border-left:4px solid #55ccf3;border-radius:2px 0 0 2px"></div>
<div class="t" style="left:1272.5px;top:937.50px;font-size:16.2px;color:#333">Fill empty cells of Lead Name</div>
<svg class="a" style="left:1740px;top:937px" width="20" height="20"><path d="M6.5 3.5 L12.5 9.5 L6.5 15.5" stroke="#555" stroke-width="2" fill="none"/></svg>
<div class="a" style="left:1251px;top:978px;width:524px;height:47px;background:#fefefe;box-shadow:0 2px 2px rgba(80,60,80,0.06), 0 0 1px rgba(200,170,200,0.25);border-left:4px solid #55ccf3;border-radius:2px 0 0 2px"></div>
<div class="t" style="left:1272.5px;top:992.50px;font-size:16.2px;color:#333">Drop Lead Name</div>
<svg class="a" style="left:1740px;top:992px" width="20" height="20"><path d="M6.5 3.5 L12.5 9.5 L6.5 15.5" stroke="#555" stroke-width="2" fill="none"/></svg>
</body></html>
